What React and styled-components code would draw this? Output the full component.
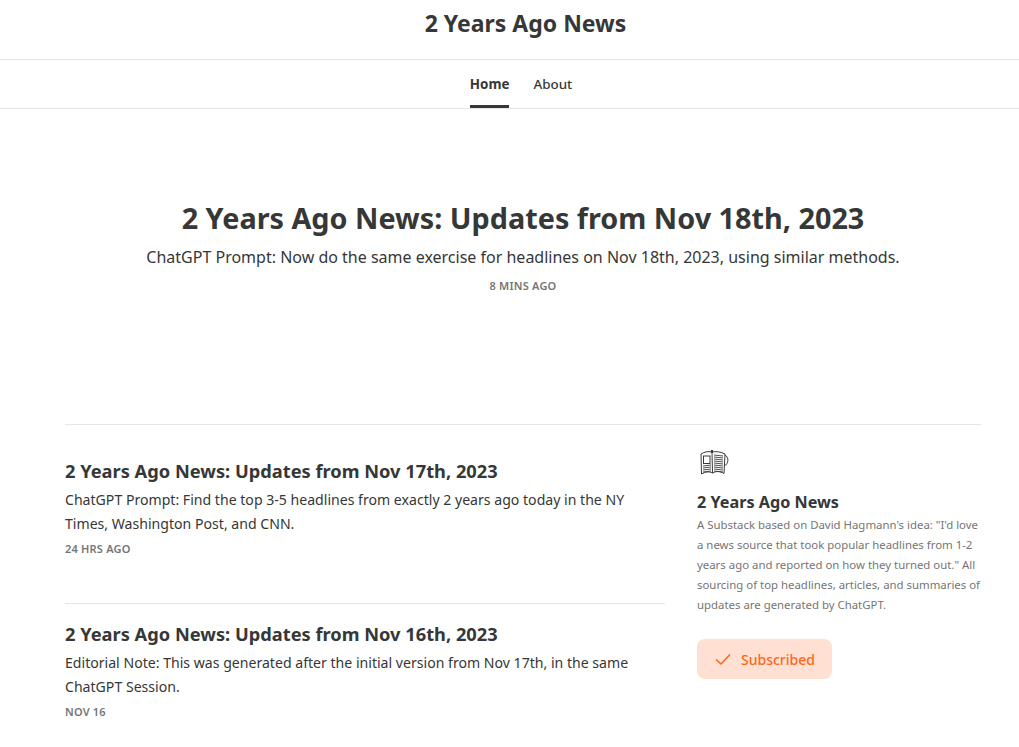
import React from 'react'
import styled, { createGlobalStyle } from 'styled-components'

const Global = createGlobalStyle`
  html, body { margin: 0; padding: 0; background: #fff; }
  html { overflow: hidden; }
  body {
    font-family: "Noto Sans", "Open Sans", "Liberation Sans", sans-serif;
    color: #363737;
    overflow: hidden;
    height: 747px;
  }
`

// the page in the screenshot is a little wider than the window, so it gets cropped on the right
const Page = styled.div`
  width: 1046px;
`
const Masthead = styled.header`
  height: 60px;
  box-sizing: border-box;
  padding: 0 0 13px 5px;
  display: flex;
  align-items: center;
  justify-content: center;
  border-bottom: 1px solid #e6e6e6;
`
const SiteTitle = styled.h1`
  margin: 0;
  font-size: 23px;
  font-weight: 700;
  line-height: 32px;
`
const Nav = styled.nav`
  height: 48px;
  padding-right: 4px;
  display: flex;
  justify-content: center;
  gap: 24px;
  border-bottom: 1px solid #e6e6e6;
`
const NavItem = styled.a`
  display: flex;
  align-items: center;
  font-size: 13.400px;
  font-weight: ${p => (p.$active ? 700 : 500)};
  box-shadow: ${p => (p.$active ? 'inset 0 -3px 0 #363737' : 'none')};
`
const Hero = styled.section`
  padding-top: 91px;
  height: 315px;
  box-sizing: border-box;
  text-align: center;
`
const HeroTitle = styled.h2`
  margin: 0;
  font-size: 28.800px;
  font-weight: 700;
  line-height: 36px;
`
const HeroText = styled.p`
  margin: 8px 0 0;
  font-size: 16px;
  line-height: 26px;
`
const Meta = styled.div`
  margin-top: ${p => p.$top || 5}px;
  font-size: 11px;
  font-weight: 600;
  line-height: 16px;
  letter-spacing: 0.2px;
  color: #757575;
  text-transform: uppercase;
`
const Columns = styled.div`
  margin: 0 65px;
  border-top: 1px solid #e6e6e6;
  display: grid;
  grid-template-columns: 600px 284px;
  column-gap: 32px;
`
const Feed = styled.main`
  display: flex;
  flex-direction: column;
`
const Post = styled.article`
  padding: ${p => (p.$first ? '33px' : '17px')} 0 ${p => (p.$first ? '46px' : '0')};
  border-bottom: ${p => (p.$first ? '1px solid #e6e6e6' : 'none')};
`
const PostTitle = styled.h3`
  margin: 0;
  font-size: 18.250px;
  font-weight: 700;
  line-height: 26px;
`
const PostText = styled.p`
  margin: 4px 0 0;
  font-size: 14.100px;
  line-height: 24px;
`
const Sidebar = styled.aside`
  padding-top: 25px;
`
const Logo = styled.svg`
  display: block;
  margin-left: 2px;
`
const SideTitle = styled.h4`
  margin: 14px 0 0;
  font-size: 16.200px;
  font-weight: 700;
  line-height: 24px;
`
const SideText = styled.p`
  margin: 1px 0 0;
  font-size: 11.400px;
  line-height: 20px;
  color: #757575;
`
const SubscribedButton = styled.button`
  margin-top: 24px;
  width: 135px;
  height: 40px;
  display: flex;
  align-items: center;
  justify-content: center;
  gap: 9px;
  border: 0;
  border-radius: 8px;
  background: #ffe0d2;
  color: #ff6719;
  font-family: inherit;
  font-size: 14px;
  font-weight: 500;
`

const NewsIcon = () => (
  <Logo width="30" height="26" viewBox="0 0 30 26" fill="none" stroke="#3a3a3a" strokeWidth="1">
    <path d="M13 2 C9 1 5 2 2 4 L2.500 24 C6 22 10 21 13.500 23 C17 21 21 21 25 23.500 L26 4 C22 2 17 1 13 2 Z" />
    <path d="M13 2 L13.500 23" />
    <path d="M26 5 C30 7 30 14 25 16" />
    <path d="M13 0 L13 3" strokeWidth="2" />
    <rect x="4.500" y="6" width="6.500" height="7.500" />
    <path d="M4 16 L12 15 M4 18 L12 17 M4 20 L12 19 M4 22 L12 21" strokeWidth="0.900" />
    <path d="M15 5 L24 6 M15 7 L24 8 M15 9 L24 10 M15 11 L24 12 M15 13 L24 14 M15 15 L24 16 M15 17 L24 18 M15 19 L24 20 M15 21 L24 22" strokeWidth="0.900" />
  </Logo>
)

export default function App() {
  return (
    <Page>
      <Global />
      <Masthead>
        <SiteTitle>2 Years Ago News</SiteTitle>
      </Masthead>
      <Nav>
        <NavItem $active>Home</NavItem>
        <NavItem>About</NavItem>
      </Nav>
      <Hero>
        <HeroTitle>2 Years Ago News: Updates from Nov 18th, 2023</HeroTitle>
        <HeroText>ChatGPT Prompt: Now do the same exercise for headlines on Nov 18th, 2023, using similar methods.</HeroText>
        <Meta $top={8}>8 mins ago</Meta>
      </Hero>
      <Columns>
        <Feed>
          <Post $first>
            <PostTitle>2 Years Ago News: Updates from Nov 17th, 2023</PostTitle>
            <PostText>ChatGPT Prompt: Find the top 3-5 headlines from exactly 2 years ago today in the NY Times, Washington Post, and CNN.</PostText>
            <Meta>24 hrs ago</Meta>
          </Post>
          <Post>
            <PostTitle>2 Years Ago News: Updates from Nov 16th, 2023</PostTitle>
            <PostText>Editorial Note: This was generated after the initial version from Nov 17th, in the same ChatGPT Session.</PostText>
            <Meta>Nov 16</Meta>
          </Post>
        </Feed>
        <Sidebar>
          <NewsIcon />
          <SideTitle>2 Years Ago News</SideTitle>
          <SideText>A Substack based on David Hagmann's idea: "I'd love a news source that took popular headlines from 1-2 years ago and reported on how they turned out." All sourcing of top headlines, articles, and summaries of updates are generated by ChatGPT.</SideText>
          <SubscribedButton>
            <svg width="18" height="18" viewBox="0 0 18 18" fill="none" stroke="#ff6719" strokeWidth="1.600">
              <path d="M2 9.500 L7 14 L16 4.500" />
            </svg>
            Subscribed
          </SubscribedButton>
        </Sidebar>
      </Columns>
    </Page>
  )
}
